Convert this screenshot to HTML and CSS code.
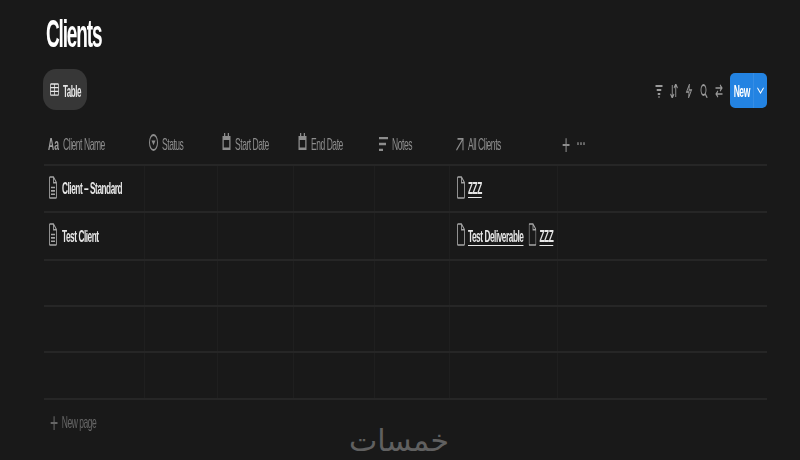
FILE: index.html
```html
<!DOCTYPE html>
<html lang="en">
<head>
<meta charset="utf-8">
<title>Clients</title>
<link rel="stylesheet" href="styles.css">
</head>
<body>
<svg class="defs" aria-hidden="true">
  <symbol id="doc" viewBox="0 0 16 24" preserveAspectRatio="none"><path d="M2 1h7l6 6v15a1 1 0 0 1-1 1H2a1 1 0 0 1-1-1V2a1 1 0 0 1 1-1zM9 1v6h6" fill="none" stroke="currentColor" stroke-width="1.700"/></symbol>
  <symbol id="doclines" viewBox="0 0 16 24" preserveAspectRatio="none"><path d="M2 1h7l6 6v15a1 1 0 0 1-1 1H2a1 1 0 0 1-1-1V2a1 1 0 0 1 1-1zM9 1v6h6M4 12h8M4 15.500h8M4 19h8" fill="none" stroke="currentColor" stroke-width="1.700"/></symbol>
  <symbol id="cal" viewBox="0 0 18 17" preserveAspectRatio="none"><path d="M1 3h16v14H1zM4 0h2.500v4H4zM11.500 0H14v4h-2.500z" fill="currentColor"/><path d="M3.500 7h11v7.500h-11z" fill="#191919"/></symbol>
</svg>
<div class="page">
<div class="stage">
  <h1 class="title">Clients</h1>
  <div class="bar">
    <div class="tab">
      <svg class="ic-tab" viewBox="0 0 18 14" preserveAspectRatio="none"><path d="M2 1h14a1 1 0 0 1 1 1v10a1 1 0 0 1-1 1H2a1 1 0 0 1-1-1V2a1 1 0 0 1 1-1zM1 5h16M1 9h16M9 1v12" fill="none" stroke="currentColor" stroke-width="1.500"/></svg>
      <span>Table</span>
    </div>
    <div class="tools">
      <svg class="tool" viewBox="0 0 16 14" preserveAspectRatio="none"><path d="M1 2h14M3.500 6h9M5.500 10h5M7 13h2" stroke="currentColor" stroke-width="2" fill="none"/></svg>
      <svg class="tool" viewBox="0 0 16 14" preserveAspectRatio="none"><path d="M4.500 14V1M1 10l3.500 4L8 10M11.500 0v13M8 4l3.500-4L15 4" stroke="currentColor" stroke-width="1.800" fill="none"/></svg>
      <svg class="tool" viewBox="0 0 16 14" preserveAspectRatio="none"><path d="M9 0L3 8h5l-1 6 6-8H8z" stroke="currentColor" stroke-width="1.500" fill="none"/></svg>
      <svg class="tool" viewBox="0 0 16 14" preserveAspectRatio="none"><ellipse cx="7" cy="6" rx="5" ry="5" stroke="currentColor" stroke-width="1.800" fill="none"/><path d="M10.500 10l4 4" stroke="currentColor" stroke-width="1.800"/></svg>
      <svg class="tool" viewBox="0 0 16 14" preserveAspectRatio="none"><path d="M1 4h13M10 1l4 3-4 3M15 10H2M6 7l-4 3 4 3" stroke="currentColor" stroke-width="1.600" fill="none"/></svg>
      <div class="new">
        <span class="new-label">New</span>
        <span class="new-arrow"><svg class="chev" viewBox="0 0 16 8" preserveAspectRatio="none"><path d="M1 1l7 6 7-6" stroke="currentColor" stroke-width="1.600" fill="none"/></svg></span>
      </div>
    </div>
  </div>
  <div class="heads">
    <div class="head"><span class="aa">Aa</span><span>Client Name</span></div>
    <div class="head"><svg class="ic-status" viewBox="0 0 18 18" preserveAspectRatio="none"><circle cx="9" cy="9" r="8" fill="none" stroke="currentColor" stroke-width="2"/><path d="M5 7h8l-4 5z" fill="currentColor"/></svg><span>Status</span></div>
    <div class="head"><svg class="ic-cal"><use href="#cal"/></svg><span>Start Date</span></div>
    <div class="head"><svg class="ic-cal"><use href="#cal"/></svg><span>End Date</span></div>
    <div class="head"><svg class="ic-notes" viewBox="0 0 18 14" preserveAspectRatio="none"><path d="M0 1h18M0 7h14M0 13h8" stroke="currentColor" stroke-width="2.400"/></svg><span>Notes</span></div>
    <div class="head"><svg class="ic-arrow" viewBox="0 0 16 16" preserveAspectRatio="none"><path d="M1 15L14 2M3 2h11v13" stroke="currentColor" stroke-width="2" fill="none"/></svg><span>All Clients</span></div>
    <div class="head head-add"><span class="plus">+</span><span class="dots">···</span></div>
  </div>
  <div class="rows">
    <div class="row">
      <div class="cell name"><svg class="ic-doc"><use href="#doclines"/></svg><span>Client – Standard</span></div>
      <div class="cell"></div><div class="cell"></div><div class="cell"></div><div class="cell"></div>
      <div class="cell rel"><svg class="ic-doc"><use href="#doc"/></svg><span class="link">ZZZ</span></div>
      <div class="cell"></div>
    </div>
    <div class="row">
      <div class="cell name"><svg class="ic-doc"><use href="#doclines"/></svg><span>Test Client</span></div>
      <div class="cell"></div><div class="cell"></div><div class="cell"></div><div class="cell"></div>
      <div class="cell rel"><svg class="ic-doc"><use href="#doc"/></svg><span class="link">Test Deliverable</span><svg class="ic-doc second"><use href="#doc"/></svg><span class="link">ZZZ</span></div>
      <div class="cell"></div>
    </div>
    <div class="row"><div class="cell"></div><div class="cell"></div><div class="cell"></div><div class="cell"></div><div class="cell"></div><div class="cell"></div><div class="cell"></div></div>
    <div class="row"><div class="cell"></div><div class="cell"></div><div class="cell"></div><div class="cell"></div><div class="cell"></div><div class="cell"></div><div class="cell"></div></div>
    <div class="row"><div class="cell"></div><div class="cell"></div><div class="cell"></div><div class="cell"></div><div class="cell"></div><div class="cell"></div><div class="cell"></div></div>
  </div>
  <div class="newpage"><span class="plus">+</span><span>New page</span></div>
</div>
</div>
<div class="mark" lang="ar" dir="rtl">خمسات</div>
</body>
</html>
```
FILE: styles.css
```css
html, body {
  margin: 0;
  height: 460px;
  width: 800px;
  overflow: hidden;
  background: #191919;
}
.defs { display: none; }
.page {
  width: 800px;
  height: 460px;
  overflow: hidden;
}
.stage {
  box-sizing: border-box;
  width: 1600px;
  height: 460px;
  padding: 0 66px 0 88px;
  transform: scaleX(.5);
  transform-origin: 0 0;
  font-family: "Liberation Sans", Arial, sans-serif;
  font-size: 17px;
  letter-spacing: -.9px;
  color: #8d8d8d;
  filter: blur(.3px);
}
.title {
  margin: 0;
  padding: 12px 0 0 4px;
  height: 57px;
  box-sizing: border-box;
  font-size: 38px;
  line-height: 45px;
  font-weight: 700;
  letter-spacing: -2.300px;
  color: #fff;
}
.bar {
  display: flex;
  justify-content: space-between;
  align-items: center;
  height: 41px;
  margin-top: 12px;
}
.tab {
  display: flex;
  align-items: center;
  gap: 8px;
  height: 41px;
  width: 88px;
  box-sizing: border-box;
  margin-left: -2px;
  padding: 4px 0 0 14px;
  background: #373737;
  border-radius: 26px / 14px;
  color: #e6e6e6;
  font-weight: 700;
  font-size: 16px;
}
.ic-tab { width: 18px; height: 13px; margin-top: -5px; }
.tools {
  display: flex;
  align-items: center;
  margin-top: 1px;
  color: #9a9a9a;
}
.tool { width: 16px; height: 14px; margin-right: 14px; margin-top: 2px; }
.new {
  display: flex;
  width: 74px;
  height: 35px;
  border-radius: 10px / 5px;
  background: #2383e2;
  color: #fff;
  font-weight: 700;
  font-size: 17px;
  overflow: hidden;
}
.new-label {
  display: flex;
  align-items: center;
  justify-content: center;
  width: 48px;
  padding-top: 3px;
  box-sizing: border-box;
  border-right: 1px solid #4a97e6;
}
.new-arrow {
  flex: 1;
  display: flex;
  align-items: center;
  justify-content: center;
}
.chev { width: 14px; height: 7px; }
.heads, .row {
  display: grid;
  grid-template-columns: 202px 146px 152px 162px 150px 216px 418px;
}
.heads { height: 54px; box-sizing: border-box; padding-top: 15px; }
.head {
  display: flex;
  align-items: center;
  gap: 8px;
  padding-left: 8px;
}
.aa { font-size: 17px; font-weight: 700; color: #a0a0a0; letter-spacing: 0; width: 20px; margin-right: 2px; }
.ic-status { width: 18px; height: 17px; margin-top: -4px; }
.ic-cal { width: 18px; height: 17px; margin-top: -6px; }
.ic-notes { width: 18px; height: 14px; margin-top: -2px; }
.ic-arrow { width: 16px; height: 14px; margin: -2px 0 0 4px; }
.head-add { gap: 14px; }
.plus { font-size: 28px; line-height: 20px; font-weight: 400; }
.dots { font-size: 18px; font-weight: 700; letter-spacing: 0; }
.rows {
  display: grid;
  grid-template-rows: 47px 48px 46px 46px 47px;
  border-top: 2px solid #262626;
}
.row { box-sizing: border-box; border-bottom: 2px solid #262626; }
.cell {
  display: flex;
  align-items: center;
  gap: 8px;
  padding-left: 10px;
  box-sizing: border-box;
  border-right: 1px solid #262626;
  color: #e6e6e6;
  font-weight: 700;
  font-size: 16.500px;
}
.cell:last-child { border-right: 0; }
.ic-doc { width: 16px; height: 23px; color: #a6a6a6; margin-right: 2px; margin-top: -3px; flex: none; }
.rel { padding-left: 14px; gap: 6px; }
.rel .ic-doc { margin-right: 0; }
.second { margin-left: 4px; }
.link { text-decoration: underline; text-underline-offset: 3px; }
.newpage {
  display: flex;
  align-items: center;
  gap: 8px;
  margin-top: 13px;
  padding-left: 12px;
  color: #666;
}
.mark {
  position: absolute;
  left: 351px;
  top: 423px;
  width: 98px;
  text-align: center;
  font-family: "DejaVu Sans", sans-serif;
  font-size: 30px;
  line-height: 36px;
  color: #606060;
}
```
